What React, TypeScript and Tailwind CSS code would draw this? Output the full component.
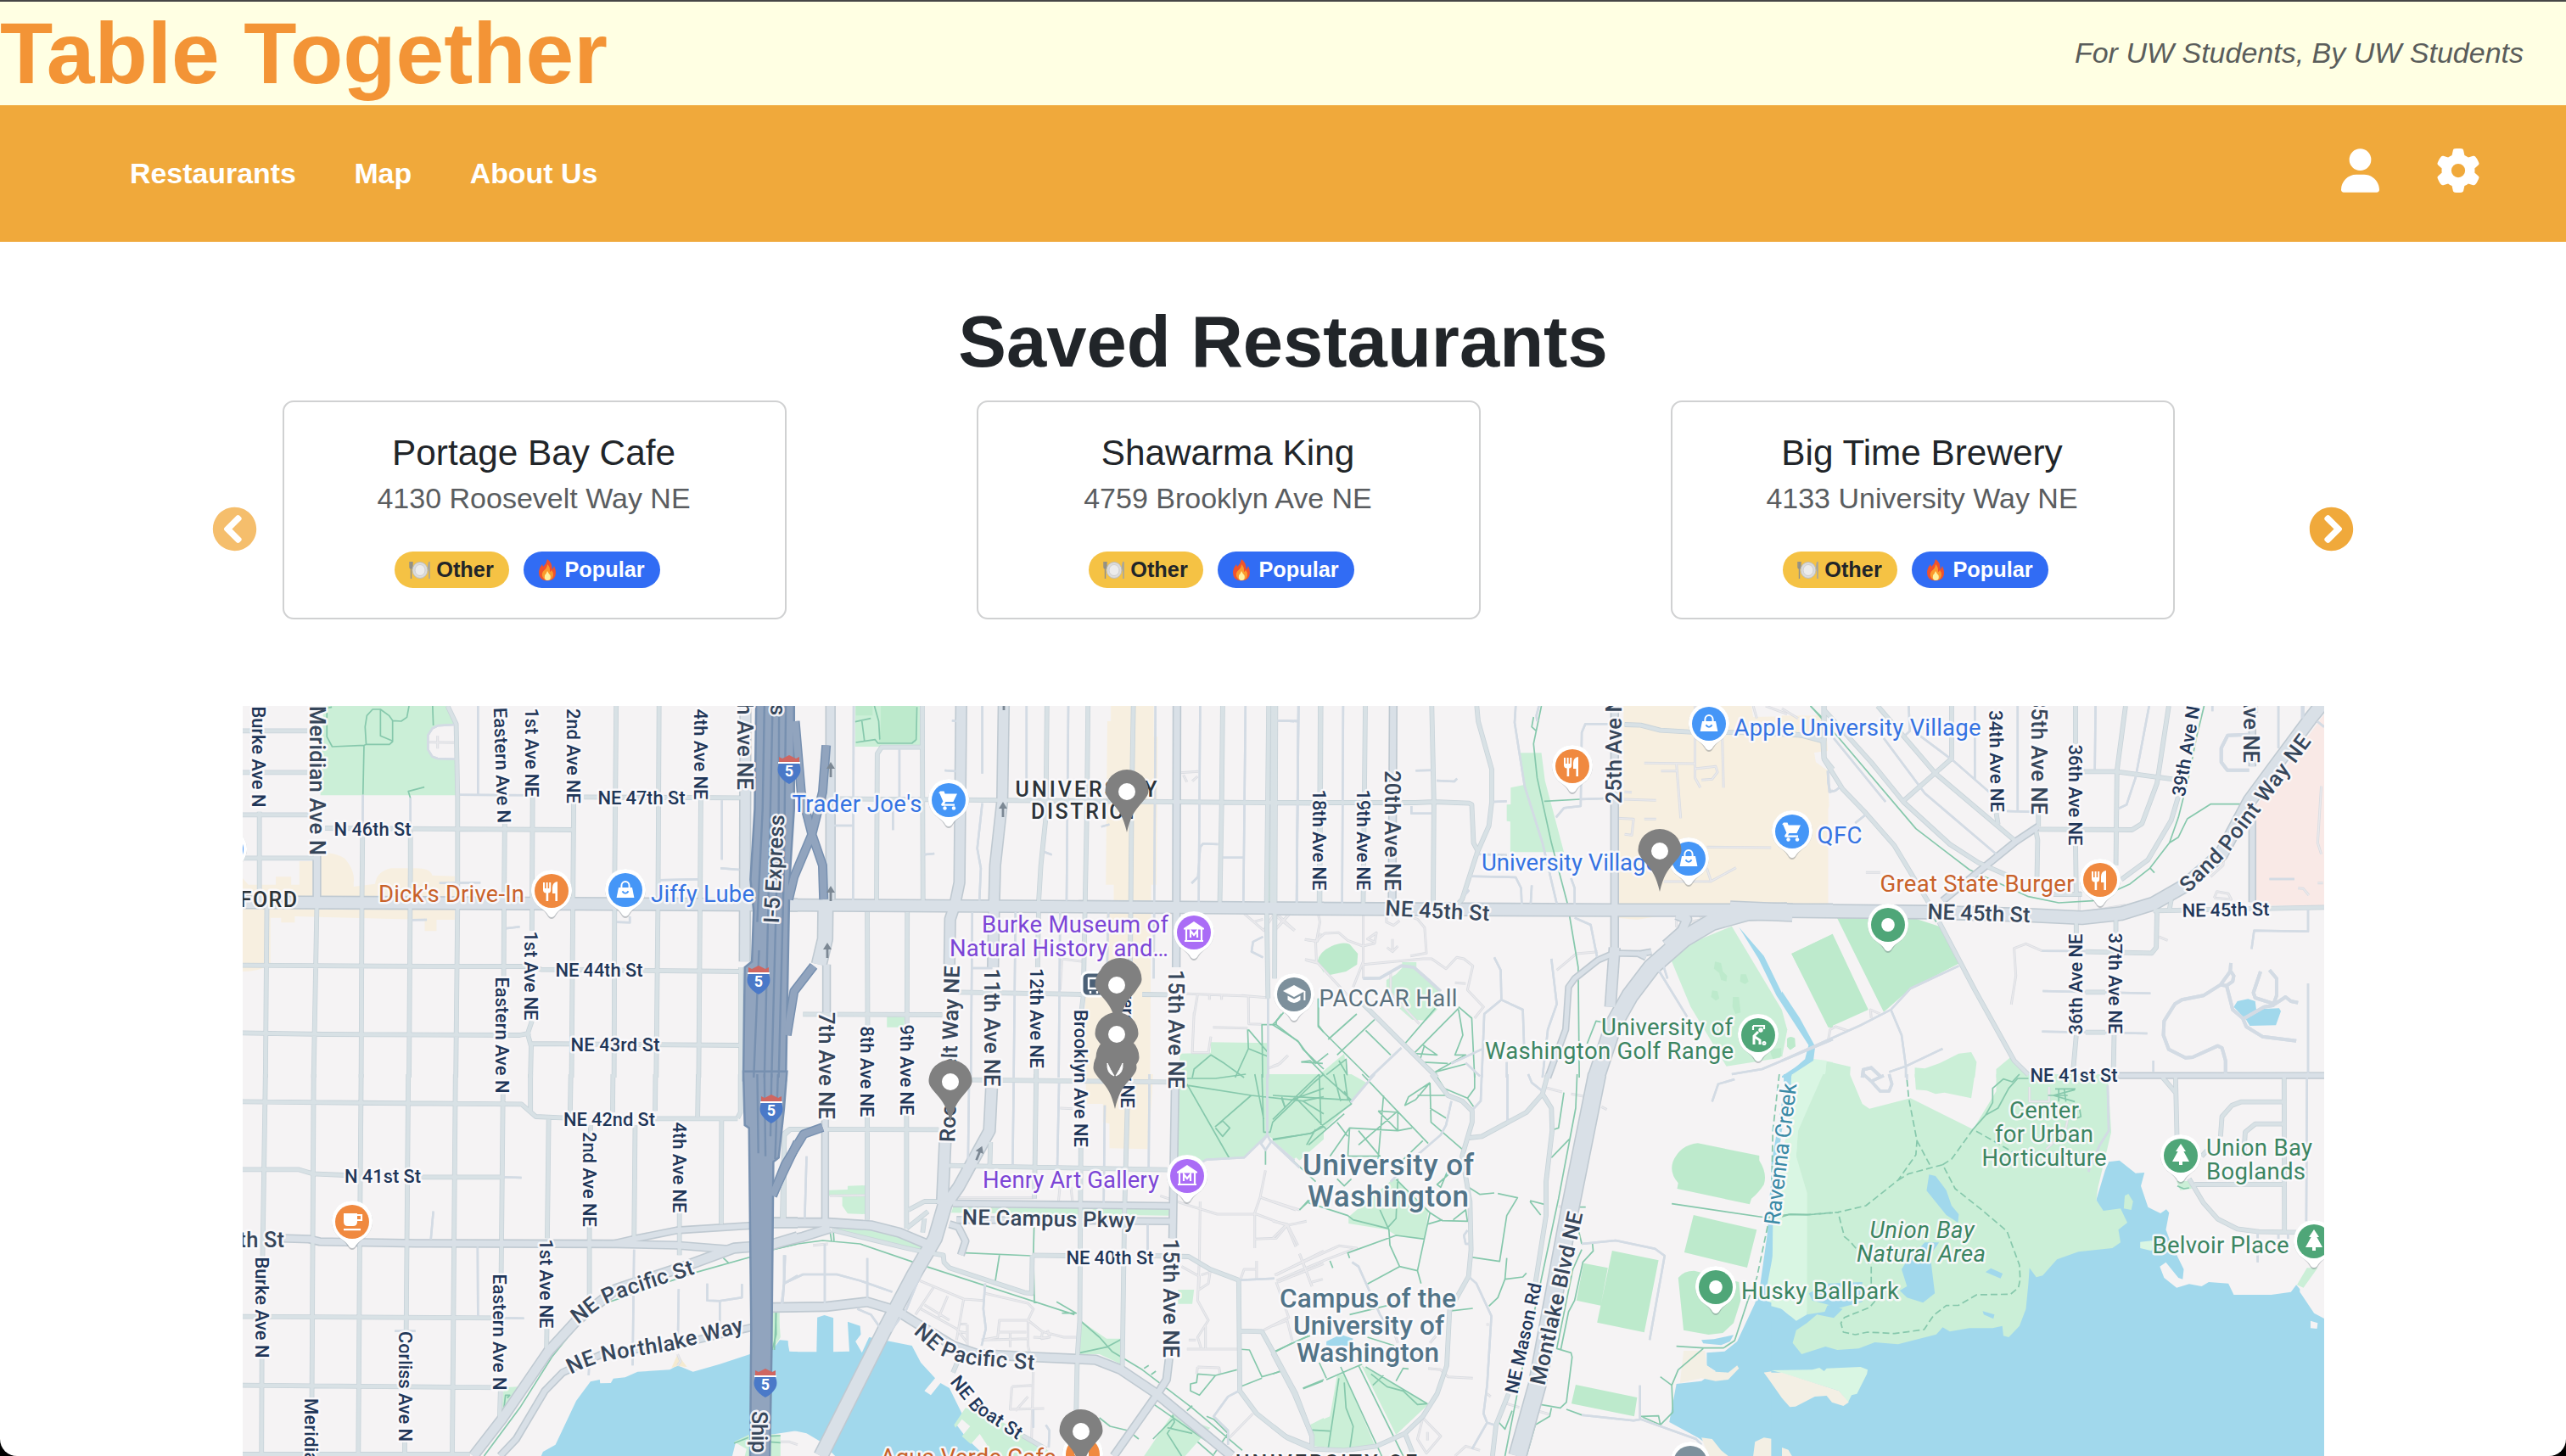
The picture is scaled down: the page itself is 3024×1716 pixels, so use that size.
import React from "react";
import { FaUser, FaGear } from "react-icons/fa6";
import { FaChevronCircleLeft, FaChevronCircleRight } from "react-icons/fa";

const sans = "font-['Liberation_Sans',Arial,sans-serif]";

/* ------------------------------------------------------------------ */
/* Map data. The map is cut in eight tiles; each tile has its own units */
/* ------------------------------------------------------------------ */

type Tile = { x: number; y: number; areas?: [string, string][]; roads: [number, string][]; paths?: string; dashes?: string; walks?: string; highway?: string; lanes?: string; ramps?: string };

const PARK = "#cbefd7";
const FIELD = "#bdeacc";
const PALE = "#d9f6e3";
const WATER = "#a1d8ec";
const SHOP = "#f7efe0";
const SAND = "#f3efe4";
const LAND = "#f5f3f4";

const tiles: Tile[] = [
  {
    x: 280, y: 820,
    areas: [
      [PARK, "M240,36 L588,36 L612,100 L612,352 L232,352 Z"],
      [LAND, "M612,100 L560,106 L545,116 L533,140 L533,190 L545,215 L560,222 L612,226 Z"],
      [SHOP, "M14,645 L30,668 L107,668 L107,640 L150,640 L150,668 L173,668 L173,585 L212,585 L212,560 Q260,545 300,575 Q330,620 325,660 L325,675 L385,665 Q390,620 430,610 L500,610 Q540,610 545,635 L608,638 L608,792 L557,792 L557,832 L524,832 L524,792 L160,780 L160,802 L122,802 L122,785 L92,785 L92,950 Q60,975 14,975 Z"],
    ],
    roads: [
      [2.5, "M673,36 L673,350 M1356,370 L1356,580 M1352,610 L1405,615 M1180,652 L1290,649 M565,662 L680,661 M488,793 L530,792 M750,823 L790,817 M1062,800 L1098,802 L1098,780 M622,350 L820,352 M351,350 L350,470 M484,362 L484,470 M607,102 L560,106 L545,116 L533,140 L533,190 L545,215 L560,222 L612,224"],
      [5, "M61,410 L61,740 M82,740 L78,1350 M222,740 L213,1350 M350,470 L348,740 L346,1350 M484,470 L484,600 L480,1350 M588,36 L612,100 L616,360 L616,740 L611,1350 M748,450 L746,740 L745,1000 M826,350 L824,830 M824,1150 L812,1195 L822,1240 L820,1350 M941,380 L935,1350 M1060,36 L1056,600 L1054,1350 M1180,36 L1177,740 L1172,1350 M1297,370 L1291,1350 M14,124 L195,124 M14,271 L195,271 M14,421 L200,421 M245,468 L940,474 M14,574 L225,574 M970,358 L1415,361 M14,953 L400,956 L830,957 L850,968 L1415,975 M14,1192 L240,1197 L790,1200 L820,1192 M820,1230 L1408,1236 M1409,960 L1409,1350"],
      [8, "M222,560 L222,740"],
      [12, "M1422,36 L1420,940"],
      [14, "M14,730 L600,733 L1568,740"],
    ],
    paths: "M264,40 L250,44 L250,145 L265,180 L355,175 L360,172 L357,110 L362,70 L378,48 L400,48 L424,70 L434,88 L434,162 L425,172 L360,172 M400,48 L400,142 L434,160 M434,88 L458,90 L474,76 L480,36 M546,36 L548,105 M354,175 L351,350 M484,362 L478,338 L523,323",
    walks: "M535,164 L606,166 M560,142 L560,187",
    highway: "M1452,30 L1558,30 L1558,400 L1545,660 L1535,1360 L1416,1360 L1420,960 L1440,940 L1445,760 L1436,650 L1448,400 Z",
    lanes: "M1475,36 L1470,400 L1455,800 M1498,36 L1490,500 L1475,1350 M1516,36 L1515,400 L1495,1350 M1535,36 L1530,600 L1515,1350 M1460,900 L1445,1350",
  },
  {
    x: 900, y: 820,
    areas: [
      [PARK, "M256,36 L442,36 L442,180 L256,180 Z"],
      [FIELD, "M328,36 L426,36 L426,165 L322,165 L328,100 Z M258,36 L305,36 L305,70 L258,70 Z"],
      [SHOP, "M972,36 L1092,36 L1092,145 L1103,145 L1100,668 L1085,668 L1082,1350 L900,1350 L900,1060 L960,1060 L960,770 L980,770 L980,668 L958,668 L962,90 L972,90 Z"],
      [PARK, "M345,1132 L395,1136 L392,1172 L345,1172 Z M1252,1225 L1411,1228 L1411,1350 L1160,1350 L1166,1265 L1252,1262 Z M1416,36 L1426,36 L1421,735 L1411,735 Z M1552,940 L1568,910 L1568,980 Z"],
    ],
    roads: [
      [2.5, "M252,36 L250,725 M380,190 L380,358 M612,36 L612,275 M612,380 L598,540 L608,610 L604,725 M584,765 L580,1350 M580,963 L640,963 M736,36 L736,300 M705,765 L700,1350 M830,765 L826,1350 M853,36 L848,725 M1097,36 L1092,1000 M965,765 L960,1050 M1222,36 L1218,735 M1349,36 L1343,735 M1497,36 L1492,735 M195,459 L250,459 M362,380 L362,475 M1438,88 L1497,90 M1285,572 L1343,572 M1272,525 L1230,523 L1222,535 L1216,640 L1198,663 M527,88 L542,90 M507,264 L538,267 M448,562 L478,558 M785,552 L807,562 M945,463 L968,455 M1398,852 L1370,870 L1366,905 L1398,925 M1412,1070 L1412,1350"],
      [5, "M442,182 L330,182 L318,205 L316,725 M444,36 L446,725 M793,36 L790,430 L776,600 L770,725 L767,960 M908,36 L905,400 L900,725 L895,1060 L890,1110 M1035,36 L1030,400 L1026,1000 M1285,36 L1282,400 L1277,735 M1414,36 L1408,735 L1412,1070 M1426,36 L1423,735 M1560,36 L1557,735 M200,364 L1568,380 M290,765 L291,1165 M402,765 L401,1165 M110,1126 L500,1128 M545,1048 L895,1056 M1060,1056 L1130,1057 M763,1320 L763,1350"],
      [8, "M1157,36 L1155,960 M176,950 L176,1120"],
      [10, "M187,36 L187,720"],
      [12, "M553,36 L548,660 L535,740 L522,790 L520,950 M672,36 L668,370 L648,600 L645,740 L642,960"],
      [17, "M173,750 L172,860 L155,950"],
      [13.5, "M70,740 L800,745 L1568,752"],
    ],
    paths: "M429,40 L427,155 L415,168 L320,168 L312,155 L258,165 M310,36 L322,90 L325,155 M256,92 L300,80 M275,90 L282,158 M1450,1125 L1435,1150 L1435,1163 L1395,1163 L1397,1350 M1357,1180 L1411,1260 M1435,1163 L1498,1225 L1510,1250 L1568,1320 M1200,1350 L1205,1320 L1252,1270 L1290,1300 L1345,1350 M1355,1180 L1357,1248 L1320,1350 M1358,1248 L1411,1275 M1505,1295 L1530,1290 L1568,1340 M1553,1070 L1553,1165 L1568,1190",
    walks: "M1157,1052 L1357,1062 L1358,1160 L1395,1162 M1205,1130 L1215,1055 M1205,1120 L1200,1262 L1245,1262 L1252,1205 M1258,1172 L1355,1175 M1248,1055 L1248,1075 M1282,1055 L1282,1075 M1338,1060 L1415,1068 M1345,770 L1400,830 L1430,770 M1370,800 L1398,790 M1440,775 L1487,830 M1475,765 L1430,830 M1515,862 L1550,868 L1560,840 M1518,935 L1550,945 M835,930 L830,1040 M835,930 L895,940 M1165,272 L1217,268 M1175,280 L1185,305 M1200,302 L1215,285 M1410,1318 L1440,1305 L1468,1272",
    ramps: "M88,90 L105,340 L135,490 L165,600 L168,720 M175,175 L165,340 L135,490 L85,640 L70,720 M140,955 L85,1045 L65,1200",
  },
  {
    x: 1500, y: 820,
    areas: [
      [PARK, "M693,202 L752,202 L762,300 L815,553 L665,553 L665,445 L655,443 L655,385 L666,384 L666,325 L704,315 Z"],
      [FIELD, "M125,940 Q130,905 165,885 Q195,868 215,878 L238,912 L236,950 L205,975 L160,987 Q135,975 125,940 Z"],
      [PARK, "M362,942 L402,942 L402,965 L470,1050 L460,1110 L430,1148 L390,1145 L350,1100 L340,1060 L318,1040 L318,1005 L345,985 L362,962 Z M200,1265 L208,1350 L120,1350 Z"],
      [SHOP, "M982,36 L1340,36 L1345,75 L1545,70 L1553,195 L1515,200 L1520,245 L1555,265 L1555,740 L965,740 L965,400 L982,380 Z M965,770 L1100,775 L1020,792 L965,785 Z"],
      [PARK, "M1112,925 L1160,880 L1285,815 L1425,1110 L1440,1180 L1420,1280 L1270,1310 L1170,1100 Z"],
      [FIELD, "M1238,940 L1255,945 L1260,975 L1272,990 L1270,1010 L1255,1005 L1250,980 L1235,965 Z M1310,985 L1325,985 L1332,1010 L1322,1020 L1308,1010 Z M1230,1042 L1245,1045 L1250,1070 L1240,1078 L1227,1065 Z M1288,1065 L1305,1065 L1310,1120 L1295,1125 L1287,1100 Z M1440,1212 Q1450,1200 1462,1212 L1462,1240 L1450,1252 L1440,1240 Z M1390,1250 L1425,1245 L1425,1275 L1400,1285 Z"],
      [FIELD, "M1452,912 L1568,842 L1568,1175 L1555,1172 Z"],
      [PALE, "M1500,1285 L1568,1295 L1568,1350 L1440,1350 Z"],
      [WATER, "M1305,818 L1375,920 L1425,1050 L1517,1240 L1515,1265 L1450,1350 L1430,1350 L1490,1285 L1500,1235 L1410,1060 L1360,930 Z"],
    ],
    roads: [
      [2.5, "M72,36 L67,735 M197,36 L194,735 M680,36 L677,95 L705,320 L755,520 L795,735 M745,36 L738,70 L740,90 M14,88 L72,90 M400,265 L446,263 M459,300 L508,303 L516,293 M388,390 L388,416 L446,416 M618,375 L655,373 M555,638 L680,642 L695,680 L697,738 M725,670 L722,735 M572,560 L655,563 M835,645 L845,680 L845,740 M793,430 L815,397 L862,390 L865,130 L875,100 L945,100 M860,366 L950,362 M845,785 L890,810 L908,925 M620,925 L638,970 L640,1075 L700,1110 L705,1290 M640,1075 L592,1125 L585,1350 M780,930 L795,1090 L770,1180 L755,1350 M1075,960 L1160,1135 M1090,940 L1105,1000 M1285,1338 L1370,1320 L1568,1215 M540,680 L548,690 L530,715 M655,1295 L655,1350 M360,1245 L272,1350 M540,1298 L580,1345 M500,1300 L585,1250"],
      [5, "M8,36 L5,1000 M133,36 L130,735 M259,36 L253,735 M445,36 L451,380 L449,735 M571,36 L575,90 L613,260 L613,375 L605,460 L572,555 L530,720 L515,740 M5,378 L400,378 L450,375 L550,380 L557,385 L562,520 L575,552 M253,1090 L460,1350 M985,102 L1030,104 L1085,122 L1165,128 L1340,130 L1480,140 L1540,160 L1543,220 L1568,260 M1543,36 L1543,160"],
      [3.5, "M253,1000 L300,998 L360,955 L395,960 L440,1010 L470,1045"],
      [8, "M337,36 L334,735 M957,36 L957,900"],
      [6, "M1060,905 L1030,912 L955,910 L910,935 L845,1000 L828,1030 L820,1180 L770,1350 M1020,910 L1045,925"],
      [12, "M957,890 L945,1100"],
      [19, "M1440,762 L1330,765 L1230,800 L1150,860 L1060,960 L1000,1060 L955,1160 L905,1350"],
      [10, "M1130,775 L1160,790 L1145,830 L1100,880"],
      [14, "M5,752 L960,758 L1568,758"],
      [20, "M1280,757 L1455,767"],
    ],
    paths: "M752,36 L730,170 L740,290 L780,520 L825,735 L855,960 L858,1350 M730,75 L725,110 L738,125 M760,373 L860,366 M127,1070 L127,1170 L270,1350 M235,1125 L155,1215 M285,1145 L180,1270 M260,1183 L330,1270 M455,1105 L370,1230 M520,1105 L430,1220 L395,1265 L460,1340 M520,1100 L557,1140 L565,1350 M520,1110 L532,1200 L510,1270 L540,1270 L455,1330 M425,1235 L410,1295 L490,1300 M395,1265 L460,1270 L420,1235 M30,1120 L10,1150 L0,1163 L70,1220 L90,1255 L120,1300 L155,1265 M80,1295 L140,1300 M945,1160 L905,1150 L880,1230 M1505,36 L1540,80 M185,1290 L208,1340 L205,1285 L150,1340 M455,1330 L540,1302",
    walks: "M90,862 L120,868 L145,840 L185,838 L210,865 L252,885 L285,875 L290,838 L265,860 L285,870 M120,868 L122,940 L90,932 M127,770 L132,800 L122,868 M122,940 L210,1060 M253,770 L253,1000 M253,950 L420,930 L445,930 L485,965 L515,925 L535,930 L560,955 L545,1040 L590,1100 L565,1140 M360,770 L405,790 L425,820 L430,910 L385,920 M335,860 L335,905 L320,890 M335,905 L350,885 M253,940 L225,1030 M5,830 L50,768 M5,775 L60,830 M318,770 L318,800 L338,812 L355,795 M330,980 L330,1050 L410,1160 M510,1015 L540,1018 M910,905 L850,912 L795,970 M1182,36 L1182,290 L1197,325 M1182,258 L1240,250 L1245,270 L1230,295 L1200,298 M1258,130 L1262,325 M1040,238 L1180,240 M1130,240 L1142,433 M1087,266 L1130,266 M963,433 L1010,436 L1005,493 L985,490 M1040,436 L1073,436 M963,365 L1073,370 M985,340 L1005,341 M1215,535 L1395,537 M1095,657 L1227,656 L1297,608 M1227,656 L1215,610 M1345,36 L1355,80 M1380,36 L1440,65 M1555,270 L1558,340 L1568,335 M1130,795 L1130,815 L1150,820 M1165,740 L1205,790 L1165,800 M0,1310 L20,1300 L42,1272",
  },
  {
    x: 2100, y: 820,
    areas: [
      [SHOP, "M0,70 L122,72 L128,195 L90,200 L95,235 L128,265 L132,390 L118,425 L128,740 L0,740 Z"],
      ["#f9e9e6", "M1322,400 L1390,290 L1518,65 L1518,742 L1325,742 Z"],
      [FIELD, "M153,782 L360,782 L440,815 L498,945 L360,1035 L285,1118 Z M27,912 L142,842 L242,1110 L132,1172 Z M15,1212 L35,1210 L38,1240 L22,1252 L14,1240 Z"],
      [PARK, "M-10,1120 L15,1180 L0,1280 Z M125,1292 L192,1312 L190,1350 L120,1350 Z M372,1315 L400,1318 L440,1300 L495,1265 L530,1260 L545,1295 L540,1350 L372,1350 Z M600,1320 L640,1278 L690,1350 L600,1350 Z"],
      [PALE, "M85,1283 L125,1290 L120,1350 L15,1350 Z"],
      [WATER, "M0,1045 L50,1140 L93,1240 L88,1290 L15,1350 L0,1350 L0,1345 L72,1285 L78,1240 L0,1075 Z M1265,1100 L1275,1080 L1305,1072 L1325,1080 L1328,1110 L1295,1140 Z M1297,1140 L1335,1108 L1392,1105 L1397,1115 L1383,1165 L1310,1167 Z"],
    ],
    roads: [
      [2.5, "M355,36 L358,125 L345,140 M385,140 L480,230 L580,340 M285,150 L400,345 L600,560 M145,150 L290,375 M540,36 L540,295 M660,36 L660,408 M630,408 L695,410 M1028,36 L990,290 L965,385 L940,400 M878,36 L876,260 M850,903 L728,902 M730,1044 L1032,1052 M728,1187 L1023,1194 M1473,755 L1473,833 L1322,830 L1315,895 M1473,1017 L1473,1350 M1040,1290 L1040,1330 M1390,36 L1390,185 M305,1110 L335,1200 L347,1310 L347,1350 M0,1290 L220,1165 L305,1110 L360,1035 L495,955 M450,1248 L347,1310 L300,1330 M1435,648 L1365,648 M128,265 L130,310 L135,340 L150,335 L165,320 M235,420 L205,450 M1330,36 L1330,60 M1205,36 L1205,55 M1498,90 L1518,110"],
      [4, "M1257,945 L1255,975 L1228,1022 L1180,1060 L1120,1075 L1100,1090 L1070,1150 L1068,1200 L1083,1250 L1130,1280 L1150,1278 L1220,1238 L1232,1245 L1242,1290 L1242,1340 M1257,975 L1265,990 L1262,1010 L1245,1025 L1228,1022 M1245,1025 L1262,1110 L1290,1140 L1300,1170 L1345,1205 L1440,1220 M1340,975 L1320,1050 L1325,1068 L1380,1090 L1410,1065 L1425,1080 L1445,1085 M1365,970 L1385,1000 L1385,1060 L1375,1095 L1350,1100 L1295,1140 M1308,137 L1248,140 L1230,185 L1230,235 L1247,263 L1308,263 M225,1350 L228,1322 L250,1315 L275,1345 M1458,36 L1458,80"],
      [5, "M118,36 L118,225 L170,330 L235,415 L315,530 L410,730 M440,800 L540,1040 L650,1290 L690,1340 M0,130 L85,145 L115,160 M118,50 L250,235 L340,375 L470,525 L550,590 L640,640 M268,36 L430,275 L655,515 M475,36 L475,222 L340,372 M600,415 L605,455 M718,415 L718,462 M710,470 L716,510 L714,640 M720,472 L980,474 L1008,452 L1050,310 L1083,36 M822,36 L822,170 M822,530 L824,700 M962,36 L938,265 L935,600 M845,268 L935,268 L1095,295 M1110,355 L1090,440 L1025,580 L950,650 M1040,760 L1518,748 M824,790 L824,840 M824,1200 L815,1330 M935,790 L935,840 M930,1200 L928,1330 M1050,760 L1048,890 L1035,910 L850,905 M945,1342 L1518,1340 M1090,720 L1085,755 M850,1048 L905,1048 M850,1190 L905,1190 M760,702 L840,702"],
      [7, "M1317,36 L1317,250 M1317,400 L1317,730 M450,725 L655,515 L718,462"],
      [15, "M1518,20 L1480,80 L1380,250 L1310,370 L1230,560 L1130,670 L1040,735 L950,770 L840,785 L680,775 L400,765 L0,760"],
    ],
    paths: "M80,36 L160,150 L375,470 L525,615 L690,710 L775,732 L870,725 L975,665 L1030,610 L1085,520 L1110,430 L1140,280 L1160,150 L1182,36 M1085,520 L1110,500 L1135,435 L1200,383 L1300,383 M1030,608 L1043,626 M425,785 L432,800",
    walks: "M728,902 L683,877 L650,893 L655,990 L642,1092 M250,1140 L248,1110 L275,1125 M130,1215 L135,1180 L150,1170 L185,1185 M0,45 L45,80 M833,690 L832,760 M845,765 L962,740 M1055,852 L1080,865 M1510,320 L1500,520 L1510,560 M1445,680 L1460,682 L1475,705 M1500,662 L1515,662 M1210,715 L1218,692 L1250,700 L1258,720 L1210,715 M1240,540 L1235,600 L1200,640 M235,625 L275,625",
  },
  {
    x: 280, y: 1266,
    areas: [
      [WATER, "M1440,988 L1350,1025 L1275,1052 L1232,1030 L1210,1045 L1120,1052 L1085,1072 L1052,1076 L1045,1092 L1015,1093 L1014,1080 L988,1087 L948,1155 L890,1310 L855,1335 L850,1350 L1385,1350 L1395,1300 L1440,1275 Z"],
      [WATER, "M1490,985 L1515,950 L1540,945 L1545,980 L1568,982 L1568,1260 L1490,1275 Z"],
      [PARK, "M745,1108 L787,1105 L740,1190 Z M1500,840 L1515,835 L1520,930 L1495,980 Z M1440,1270 L1390,1300 L1425,1325 L1420,1350 L1520,1350 L1520,1275 Z"],
      ["#f5ead0", "M1232,990 L1258,1035 L1232,1032 L1215,1038 Z"],
    ],
    roads: [
      [2.5, "M672,610 L673,855 M548,485 L541,585 M1110,620 L1106,1030 M1235,760 L1233,920 M1315,740 L1315,800 L1350,802 L1412,790 L1412,742 M1350,802 L1350,900 M985,1010 L983,1065 M740,364 L795,366 M740,862 L802,863 M1533,640 L1530,740 L1523,815 M1530,740 L1568,712 M440,908 L498,908"],
      [5, "M78,0 L70,650 M68,1005 L67,1350 M213,0 L208,1145 M346,0 L342,600 L338,1350 M478,0 L474,600 L472,910 M468,1300 L468,1350 M610,0 L606,600 L601,1350 M743,70 L738,705 M736,1120 L733,1240 M820,0 L820,130 M871,160 L867,580 M866,900 L865,970 M933,0 L931,140 M988,180 L988,210 M985,540 L985,800 M1051,0 L1050,135 M1170,0 L1169,130 M1113,180 L1110,590 M1290,0 L1288,150 M1408,0 L1408,135 L1400,155 M1237,490 L1237,640 M1355,160 L1354,530 M14,97 L400,102 L795,106 L835,150 L920,155 M1170,157 L1400,157 M14,337 L170,337 L210,352 L300,357 M515,364 L740,364 M14,857 L740,862 M14,1100 L740,1108 M14,1344 L650,1344 M1530,520 L1530,210 L1545,195 L1568,195"],
      [7, "M1440,895 L1250,950 L1020,990 L910,1055 L860,1120 L780,1290 L735,1350 M1050,600 L1120,580 L1230,552 L1440,535"],
      [8, "M120,580 L200,583 L230,592 L500,598 L1060,600 L1230,605 L1380,620 M1490,825 L1568,825"],
      [11, "M1440,610 L1390,615 L1250,680 L1060,760 L950,870 L870,980 L740,1220 L660,1350 M1490,605 L1568,575 M1490,525 L1568,525"],
    ],
    paths: "M1568,600 L1500,620 M1440,645 L1285,700 L1030,810 L950,890 L880,1000 L790,1180 L690,1350 M1360,650 L1375,668 M745,1190 L750,1135 L762,1135 L755,1145 M1507,840 L1508,920 L1497,975 M1390,1305 L1430,1285 M1490,1300 L1520,1303 M1490,1280 L1520,1278",
    walks: "M1520,1300 L1545,1300 L1568,1310 M1232,990 L1240,1015 L1232,1030",
    highway: "M1416,-10 L1538,-10 L1530,120 L1515,295 L1500,310 L1495,985 L1490,1360 L1435,1360 L1438,900 L1432,190 L1420,180 Z",
    lanes: "M1455,0 L1458,280 M1475,0 L1478,290 M1495,0 L1492,220 M1513,0 L1505,300",
    ramps: "M1568,240 L1500,420",
  },
  {
    x: 900, y: 1266,
    areas: [
      [WATER, "M22,980 L45,940 L68,942 L68,982 L148,982 L150,860 L170,852 L195,862 L195,982 L240,980 L235,875 L270,890 L272,920 L257,945 L275,985 L295,930 L415,960 L440,1020 L480,1075 L450,1120 L468,1135 L495,1092 L520,1110 L555,1200 L540,1240 L570,1290 L620,1350 L200,1350 L160,1300 L120,1270 L75,1258 L22,1262 Z"],
      [PARK, "M565,1180 L640,1210 L780,1310 L810,1350 L600,1350 L625,1310 L605,1272 L580,1308 L555,1280 L578,1245 L555,1220 L537,1250 L533,1240 Z M22,840 L45,838 L42,930 L22,975 Z M1158,0 L1568,0 L1568,230 L1500,305 L1450,250 L1410,215 L1345,295 L1240,302 L1160,340 Z M182,410 L235,408 L235,395 L288,393 L288,495 L235,493 L220,465 L220,435 L182,430 Z M190,545 L300,550 L400,580 L455,620 L395,615 L280,580 Z M530,470 L1140,478 L1135,500 L525,490 Z M885,870 L960,935 L1000,935 L1000,1025 L940,990 L885,990 Z M1160,762 L1205,762 L1200,812 L1160,812 Z M1145,1200 L1250,1250 L1180,1350 L1065,1350 Z M1568,1215 L1530,1240 L1535,1310 L1568,1320 Z"],
      [SHOP, "M900,0 L1090,0 L1085,110 L1075,265 L968,262 L968,175 L950,170 L950,105 L905,105 Z"],
    ],
    roads: [
      [2.5, "M575,30 L572,320 M700,30 L697,325 M827,30 L822,325 M955,110 L952,455 M1080,0 L1078,330 M57,640 L57,740 L110,708 L205,708 L270,730 L360,770 M57,740 L53,810 M171,600 L171,815 M290,650 L290,800 M120,290 L115,510 M262,830 L300,850 L325,895 L355,905 M445,690 L400,830 L355,910 M620,740 L615,830 L622,900 L610,960 M1075,530 L1075,640 M1330,728 L1430,722 M1410,0 L1410,215 L1392,245 L1405,268 L1420,240 L1410,215 M1420,235 L1500,330 M1330,1120 L1300,1140 L1260,1210 L1300,1260 L1300,1310 M1410,215 L1345,295 L1240,302 L1200,330 M755,1185 L755,1250 M790,1240 L800,1260 L798,1320"],
      [5, "M290,150 L290,515 M400,145 L400,545 M490,196 L75,195 L58,215 L52,510 M515,323 L1130,338 M763,0 L758,440 M888,260 L885,870 L878,1000 L875,1190 M1018,120 L1010,500 L1004,1040 M635,240 L633,325 M752,640 L850,642 M1090,642 L1190,645 L1250,690 L1330,728 M752,640 L750,775 L730,772 L520,685 L505,665 L503,640 L450,628 M575,20 L1150,28 M190,550 L400,615 L455,630 M405,480 L450,450 L500,450 M400,545 L460,485 M445,560 L450,510 M1330,728 L1333,1120 L1380,1200 L1460,1280 L1530,1315 M1335,908 L1395,910 L1430,990 L1490,1130 L1535,1280 L1535,1330 M545,1010 L530,1055 M725,1278 L790,1325"],
      [7, "M172,160 L172,530 M530,457 L1145,466 M540,515 L1140,520 M520,530 L545,540 L565,590 L552,640"],
      [8, "M1152,50 L1145,580 M1135,1005 L1128,1080 L1100,1135 L980,1350"],
      [10, "M25,525 L180,525 L300,535 L380,560 L455,600 M25,600 L110,575 L185,545 M25,825 L175,822 L290,805 L370,835 L440,890 L530,960 L600,990 L760,1000 L930,1010 L1000,1045 L1100,1130 L1310,1350"],
      [13, "M508,240 L500,460 M638,50 L632,200 L545,400 L500,480"],
      [16, "M510,450 L480,580 L420,710 L340,900 L160,1350"],
    ],
    paths: "M25,620 L95,600 L165,588 L270,600 L420,665 M455,680 L870,850 M185,550 L190,590 M195,555 L197,590 M565,632 L750,642 M660,640 L648,735 M757,540 L755,640 L758,810 M820,805 L875,845 L835,845 M885,870 L940,930 L975,980 L1060,1045 L1200,1180 L1340,1330 M885,985 L960,965 L1000,938 M1090,1165 L1300,1350 M940,1215 L970,1245 L1020,1260 L1050,1290 M1065,1040 L1078,1030 M1085,1062 L1098,1050 M1185,1190 L1200,1172 M1330,972 L1360,975 L1395,1070 L1450,1050 M1335,1105 L1395,1075 M1215,1060 L1265,1065 L1325,1045 M1265,1065 L1220,1135 L1195,1120 L1195,1095 L1212,1090 L1215,1060 M1510,1110 L1568,1080 M1145,1205 L1150,1230 L1130,1270 L1170,1350 M1130,1250 L1200,1270 M1145,1220 L1090,1290 M1185,15 L1265,15 L1350,0 M1160,45 L1190,40 L1365,75 L1510,95 L1568,80 M1185,35 L1305,300 M1395,0 L1400,205 L1418,205 L1425,170 L1540,30 L1568,0 M1375,0 L1400,160 M1365,75 L1265,185 L1285,165 L1305,190 L1285,220 L1265,190 M1510,95 L1568,140 M1480,90 L1568,50 M1405,270 L1405,320 M1545,195 L1520,250 M1450,85 L1460,120 M1425,230 L1530,210 L1568,185 M1430,983 L1480,950 M1490,945 L1530,925 M1500,480 L1530,445 M1215,1300 L1260,1350 M1240,1210 L1260,1220 L1300,1270 L1260,1345 M30,975 L35,840",
    walks: "M437,730 L560,795 L615,800 M475,755 L425,850 M515,785 L490,860 M560,795 L540,940 M620,775 L740,810 L755,830 L740,870 L740,960 L755,1040 L750,1290 M740,870 L660,870 L655,930 L610,940 M740,870 L780,910 L840,930 L875,930 M615,940 L740,935 M655,912 L735,912 M690,910 L690,965 M695,1105 L750,1100 M695,1105 L690,1185 L785,1182 M780,910 L778,935 L800,930 L795,905 M440,830 L540,900 L570,950 M450,815 L520,870 M545,880 L570,885 M545,910 L568,915 M570,885 L570,960 M1222,450 L1220,640 L1215,800 L1245,870 L1215,930 L1225,970 M1237,890 L1237,970 M1185,972 L1330,972 M1190,940 L1210,940 M1170,680 L1220,715 L1218,760 M1225,710 L1250,700 L1245,740 L1215,765 M1110,430 L1180,460 L1270,495 L1380,495 L1465,535 L1490,610 M1405,340 L1390,435 L1375,490 L1375,615 M1390,435 L1490,480 M1465,535 L1435,580 L1375,583 M1520,520 L1465,535 M1500,635 L1535,750 M1335,725 L1345,690 L1380,690 L1380,660 M1380,690 L1380,725 M1435,710 L1568,625 M1440,735 L1568,670 M1435,735 L1470,860 L1400,905 M545,437 L755,437 M830,390 L825,455 M860,400 L865,455 M830,120 L865,122 M185,430 L285,428 M1215,1035 L1275,1038 L1278,1060 M1215,1035 L1212,1060 M1370,1200 L1300,1290 M740,1140 L705,1190 M138,605 L180,600 M755,930 L795,932",
    ramps: "M165,188 L112,212 L60,320 L25,430",
  },
  {
    x: 1500, y: 1266,
    areas: [
      [PARK, "M0,75 L60,85 L130,0 L220,0 L262,30 L218,105 L60,300 L0,235 Z M335,372 L350,372 L400,440 L435,485 L425,583 L345,570 L320,550 L212,528 L212,505 Z M180,1065 L200,1060 L285,1310 L220,1328 L115,1315 L105,1240 L160,1210 Z M248,1030 L435,1168 L345,1275 Z"],
      [FIELD, "M1135,385 Q1110,350 1120,310 Q1140,250 1190,244 L1362,288 L1362,305 Q1385,350 1375,390 Q1360,420 1340,440 L1335,460 L1132,405 Z M1178,498 L1355,550 L1328,684 L1152,630 Z M950,624 L1080,658 L1040,913 L908,878 Z M870,668 L938,685 L918,818 L850,800 Z M848,1098 L1020,1143 L1012,1210 L836,1165 Z M1135,720 Q1150,695 1180,695 L1305,735 L1310,800 L1290,880 L1260,915 L1220,921 L1150,905 Z"],
      [PALE, "M1450,0 L1568,0 L1568,880 L1465,870 L1430,830 L1372,800 L1400,600 L1395,480 L1440,240 Z"],
      [PARK, "M1540,0 L1568,0 L1568,840 L1495,840 L1497,420 L1465,300 L1470,200 Z"],
      [WATER, "M1434,0 L1452,0 L1450,60 L1425,200 L1415,300 L1400,480 L1400,640 L1385,740 L1380,800 L1400,810 L1425,830 L1465,872 L1568,848 L1568,1350 L1260,1350 L1240,1330 L1190,1285 L1110,1230 L1130,1095 L1200,1085 L1240,1050 L1215,1030 L1215,985 L1265,980 L1300,945 L1350,810 L1365,740 L1385,560 L1390,440 L1410,240 L1435,60 Z M150,945 L190,920 L225,935 L215,960 L150,960 Z M1200,940 L1235,937 L1290,922 L1280,945 L1255,958 L1205,952 Z"],
      [PARK, "M1455,920 L1470,890 L1520,855 L1568,855 L1568,960 L1510,975 L1485,990 L1460,960 Z"],
      [SAND, "M1150,978 L1210,978 L1215,1030 L1240,1052 L1275,1055 L1300,1030 L1305,1040 L1275,1080 L1240,1085 L1200,1075 L1140,1092 Z M1200,1285 L1230,1290 L1255,1330 L1275,1350 L1220,1350 Z M1350,1300 L1375,1285 L1400,1290 L1440,1350 L1345,1350 Z M1375,1055 L1410,1048 L1568,1100 L1568,1150 L1550,1137 L1520,1140 L1455,1177 L1435,1165 L1410,1110 Z"],
      [PALE, "M1405,1048 L1568,1045 L1568,1110 Z"],
    ],
    roads: [
      [2.5, "M548,715 L570,740 L612,855 L600,1100 L590,1200 L600,1232 L620,1240 M600,1232 L558,1325 M865,600 L960,588 L1070,617 L1097,642 L1055,940 M865,1205 L1010,1225 L1030,1220 L1185,1290 L1200,1310 M1028,1100 L1028,1220 M657,0 L657,165 M500,95 L485,180 L470,215 L410,280 L330,380 M285,0 L218,100 M715,0 L725,30 L755,60 M585,0 L582,95 L560,125 M222,665 L240,680 L300,850 L330,910 M1230,97 L1247,35 L1293,18 M545,552 L535,570 L540,600 L550,600 M0,240 L60,305"],
      [5, "M445,0 L490,75 L530,95 L558,130 L558,170 L530,290 L552,450 L555,620 L548,715 L495,835 L487,1030 L460,1130 L420,1210 L370,1270 L290,1315 L200,1330 L110,1325 L40,1285 L0,1245 M370,1270 L395,1350 M0,985 L60,1130 L110,1280 L110,1320 M770,0 L755,70 L780,120 L782,200 L765,380 L765,500 L735,740 M660,1130 L625,1240 L615,1350 M755,70 L710,135 L585,220 L550,225"],
      [20, "M908,0 L830,490 L740,1100 L685,1350"],
    ],
    paths: "M0,75 L220,92 M65,85 L150,195 M130,0 L135,180 M130,0 L60,85 L0,160 M140,0 L220,92 M170,0 L190,95 M200,0 L210,90 M25,80 L35,120 M0,232 L110,208 L220,105 L200,60 M100,250 L200,140 M250,0 L435,245 M310,75 L295,300 M295,130 L350,200 L215,190 L160,290 M350,130 L350,200 L390,190 M350,130 L240,250 M295,130 L350,135 M215,190 L210,290 L300,290 L240,200 M180,170 L210,220 M455,0 L480,50 L545,85 L565,50 L565,0 M545,85 L562,115 M440,30 L380,80 L370,110 L400,90 L440,30 M405,75 L485,75 M440,30 L443,170 L530,265 M440,120 L485,155 M420,235 L350,320 M0,240 L120,380 M100,445 L75,480 M100,455 L210,500 L225,515 L320,545 L345,510 L350,370 M345,372 L440,490 L475,518 L548,520 M435,530 L475,515 M440,490 L405,695 L415,740 M425,583 L345,570 L210,632 L215,650 M300,480 L325,550 L328,605 L355,680 L265,742 M355,680 L405,695 M548,400 L580,425 L620,420 M630,422 L685,437 L655,500 L635,662 L555,647 M720,447 L760,460 M720,450 L750,498 M655,650 L650,725 L700,717 L710,703 M650,725 L630,790 L605,820 M560,828 L490,838 M100,925 L5,980 M215,850 L380,800 M265,930 L340,960 M130,1020 L150,1075 M0,1060 L20,1050 M85,1112 L140,1085 M150,1080 L250,1025 M190,1035 L305,1350 M240,1030 L365,1350 M185,1075 L155,1325 M200,1090 L205,1180 L225,1245 L215,1330 M110,1258 L160,1262 M275,1060 L320,1105 L365,1120 L405,1168 L432,1165 L260,1035 M280,1100 L310,1065 M345,1085 L365,1040 L380,1042 M500,345 L460,390 L470,400 L490,340 M505,515 L540,480 L545,520 M160,660 L168,685 M180,370 L200,395 L220,370 M1117,458 L1380,507 L1450,495 L1500,497 M1130,962 L1205,968 L1262,968 L1293,942 L1330,800 M1205,970 L1135,1045 L1117,1100 L1120,1195 L1085,1240 M1085,1070 L1117,1100 M1030,1210 L1080,1208 L1085,1240 L1035,1212 M895,600 L897,625 L868,665 L845,800 L828,840 L806,975 M865,620 L840,690 L795,970 L835,985 L838,1000 L822,1160 L805,1180 L750,1168 M822,1185 L865,1205 M852,0 L848,120 L800,440 L700,1030 L650,1350 M815,65 L800,190 L788,195 M830,230 L780,295 M860,470 L876,470 M850,520 L865,600 M780,1180 L775,1210 L735,1240 L710,1350 M670,1190 L650,1255 L632,1230",
    dashes: "M1418,0 L1400,200 L1395,480 L1355,720 L1330,800 M1500,497 L1568,490",
    walks: "M5,710 L185,607 L235,615 L150,655 L10,730 M0,450 L75,480 M0,520 L40,530 L70,605 M0,580 L40,530 M75,635 L110,750 M110,735 L140,725 M0,890 L40,870 L55,945 M435,1040 L470,1045 L490,1070 L560,1075 M420,1215 L405,1290 L430,1340 L470,1280 L420,1215 M433,1265 L433,1295 M510,1350 L540,1315 L580,1330 M330,880 L350,950 M460,920 L440,950 M765,48 L810,63 M835,70 L870,78 M920,115 L935,125 M735,1188 L775,1203 M800,468 L830,470 M650,1163 L690,1178 M598,885 L605,885 M600,1130 L610,1140",
  },
  {
    x: 2100, y: 1266,
    areas: [
      [WATER, "M-30,870 L-30,1350 L1520,1350 L1520,865 L1490,845 L1450,770 L1450,760 L1440,745 L1425,770 L1370,780 L1265,780 L1250,740 L1195,735 L1175,750 L1140,742 L1105,755 L1070,720 L1058,680 L1075,665 L1110,720 L1122,725 L1125,690 L1090,600 L1075,550 L1084,490 L1076,478 L1060,492 L1025,470 L1005,395 L1015,348 L990,350 L945,305 L915,310 L905,340 L880,445 L895,485 L640,600 L400,700 L100,830 Z"],
      [PARK, "M105,0 L190,0 L225,105 L245,122 L360,85 L535,195 L600,60 L600,0 L912,0 L922,205 L885,400 L880,445 L900,483 L948,475 L967,525 L942,550 L948,595 L925,615 L830,628 L770,655 L730,712 L712,718 L693,685 L690,740 L683,830 L665,890 L635,930 L620,925 L617,890 L590,898 L525,898 L470,910 L450,895 L432,920 L325,955 L260,948 L215,970 L155,975 L122,963 L55,990 L30,950 L40,905 L70,880 L98,850 L145,862 L170,830 L128,815 L120,840 L70,850 L70,420 L40,290 L60,150 Z M372,0 L540,0 L530,85 L455,65 L430,70 L405,58 L375,55 Z M960,430 L970,423 L983,450 L978,480 L957,475 Z"],
      [PALE, "M35,0 L115,0 L45,200 L40,290 L70,420 L70,850 L40,872 L0,830 L-30,820 L-25,560 L-10,340 L15,200 Z M1003,593 L1040,588 L1035,625 L1003,615 Z"],
      [WATER, "M5,0 L28,0 L15,60 L-10,250 L-20,320 L-30,320 L5,60 Z M412,355 L430,360 L460,410 L475,465 L495,495 L493,525 L460,498 L405,412 Z M400,595 L440,595 L415,640 L428,775 L395,808 L350,790 L330,765 L350,750 L335,690 L345,670 Z M570,700 L585,686 L618,705 L612,722 Z M562,838 L595,850 L592,865 L565,850 Z M75,775 L130,740 L225,735 L225,805 L150,830 L130,815 L85,800 Z"],
      [PALE, "M-30,1047 L85,1045 L105,1038 L118,1050 L125,1040 L220,1035 L240,1045 L238,1060 L210,1130 L195,1135 L185,1160 L160,1120 L0,1057 Z"],
      [SAND, "M-50,1055 L0,1055 L160,1120 L187,1160 L172,1173 L140,1160 L125,1137 L92,1140 L38,1175 L22,1177 L0,1145 Z M0,1320 L18,1328 L28,1350 L0,1350 Z"],
      [LAND, "M1480,872 L1500,880 L1498,900 L1480,898 Z"],
      [PARK, "M1470,685 L1500,685 L1460,755 L1442,745 Z M1105,378 L1145,378 L1147,405 L1115,410 Z"],
    ],
    roads: [
      [2.5, "M1470,10 L1468,520 M1332,560 L1332,665 M1390,560 L1390,582 M1417,560 L1417,582 M912,40 L915,200 L890,250 L858,345 M350,0 L350,20"],
      [3.5, "M228,0 L250,25 L275,60 L300,60 L308,35 L300,0 M250,25 L285,5"],
      [5, "M1102,10 L1106,220 M1065,10 L1102,65 M1406,10 L1407,560 M1406,98 L1285,98 L1260,110 L1232,150 L1228,220 M1406,176 L1325,176 L1297,205 L1293,290 M1175,290 L1190,270 M1155,390 L1406,389 M1140,370 L1180,455 L1220,512 L1275,547 L1335,557 L1440,559"],
      [6, "M930,5 L1520,5"],
    ],
    paths: "M570,145 L590,100 L590,50 L620,17 L645,27 L665,0 M570,145 L605,120 L635,50 L660,15 L690,15 M535,195 L570,145 M0,504 L20,496 L70,497 M760,75 L820,55 M760,75 L820,97 M765,52 L822,52 M790,50 L795,97 M775,52 L775,97 M745,75 L800,75 M1107,395 L1125,405 L1140,402 M833,120 L837,150 L820,158",
    dashes: "M350,20 L355,85 L378,235 L375,285 L350,330 L325,375 L235,465 L157,488 L70,497 M325,375 L355,352 L450,320 L485,405 L555,475 L630,555 L665,675 L667,725 L662,755 L640,778 L545,780 L495,817 L460,818 L425,852 L398,903 L315,917 L240,912 L205,921 L172,912 L165,880 L175,860 L245,825 L262,800 M250,740 L250,680 L190,590 L175,575 L157,488 M378,235 L418,330 M450,320 L475,300 L535,195 L660,285",
    walks: "M693,45 L693,97 L748,97 L748,45 M800,160 L795,190 L770,230 L740,265",
  },
];

const SX = 660 / 1568;
const SY = 1 / 3;

function Layer({ draw }: { draw: (t: Tile) => React.ReactNode }) {
  return (
    <g>
      {tiles.map((t, i) => (
        <g key={i} transform={`translate(${t.x} ${t.y}) scale(${SX} ${SY})`}>
          {draw(t)}
        </g>
      ))}
    </g>
  );
}

const Line = ({ d, c, w, dash }: { d?: string; c: string; w: number; dash?: string }) =>
  d ? <path d={d} fill="none" stroke={c} strokeWidth={w} strokeDasharray={dash} strokeLinejoin="round" strokeLinecap="butt" vectorEffect="non-scaling-stroke" /> : null;

/* Labels ------------------------------------------------------------ */

type Kind = "st" | "av" | "poiO" | "poiB" | "poiP" | "poiG" | "poiS" | "uni" | "campus" | "area" | "creek" | "nature";

const kinds: Record<Kind, { fill: string; size: number; weight: number; italic?: boolean }> = {
  st: { fill: "#1f3658", size: 22, weight: 500 },
  av: { fill: "#36465a", size: 25.5, weight: 500 },
  poiO: { fill: "#c9622a", size: 27.5, weight: 400 },
  poiB: { fill: "#3573e2", size: 27.5, weight: 400 },
  poiP: { fill: "#7c45d6", size: 27.5, weight: 400 },
  poiG: { fill: "#3c8562", size: 27.5, weight: 400 },
  poiS: { fill: "#5a717e", size: 27.5, weight: 400 },
  uni: { fill: "#527488", size: 35, weight: 500 },
  campus: { fill: "#527488", size: 31.5, weight: 500 },
  area: { fill: "#2c3338", size: 25, weight: 500 },
  creek: { fill: "#3a8aa6", size: 26, weight: 400 },
  nature: { fill: "#3c8562", size: 27.5, weight: 400, italic: true },
};

type Label = [Kind, number, number, string, number, number?, ("start" | "middle" | "end")?];

const labels: Label[] = [
  ["st", 305, 892, "Burke Ave N", 119, 90],
  ["av", 374, 920, "Meridian Ave N", 176, 90],
  ["st", 439, 977, "N 46th St", 91],
  ["st", 592, 902, "Eastern Ave N", 136, 88],
  ["st", 627, 887, "1st Ave NE", 105, 90],
  ["st", 676, 891, "2nd Ave NE", 112, 90],
  ["st", 826, 889, "4th Ave NE", 107, 90],
  ["av", 878, 868, "7th Ave NE", 126, 90],
  ["st", 756, 940, "NE 47th St", 103],
  ["av", 912, 1024, "I-5 Express", 128, -87],
  ["av", 917, 779, "I-5 Express", 128, 90],
  ["area", 350, 1060, "WALLINGFORD", 184, 0, "end"],
  ["st", 706, 1143, "NE 44th St", 103],
  ["st", 626, 1150, "1st Ave NE", 105, 90],
  ["st", 592, 1220, "Eastern Ave N", 137, 90],
  ["st", 725, 1231, "NE 43rd St", 105],
  ["st", 718, 1319, "NE 42nd St", 108],
  ["st", 695, 1390, "2nd Ave NE", 112, 90],
  ["st", 801, 1376, "4th Ave NE", 107, 90],
  ["st", 451, 1386, "N 41st St", 90],
  ["av", 335, 1461, "N 40th St", 107, 0, "end"],
  ["st", 309, 1541, "Burke Ave N", 119, 90],
  ["st", 589, 1570, "Eastern Ave N", 137, 90],
  ["st", 644, 1513, "1st Ave NE", 105, 90],
  ["st", 478, 1634, "Corliss Ave N", 130, 90],
  ["st", 367, 1724, "Meridian Ave N", 152, 90],
  ["av", 895, 1663, "Ship Canal Bridge", 196, 90, "start"],
  ["area", 1280, 930, "UNIVERSITY", 167],
  ["area", 1278, 956, "DISTRICT", 126],
  ["av", 1119, 1242, "Roosevelt Way NE", 208, -88.5],
  ["av", 1169, 1211, "11th Ave NE", 139, 90],
  ["st", 1222, 1200, "12th Ave NE", 118, 90],
  ["st", 1274, 1271, "Brooklyn Ave NE", 162, 90],
  ["av", 1386, 1213, "15th Ave NE", 140, 90],
  ["st", 1329, 1221, "University Way NE", 170, 90],
  ["av", 974, 1256, "7th Ave NE", 126, 90],
  ["st", 1022, 1263, "8th Ave NE", 107, 90],
  ["st", 1069, 1261, "9th Ave NE", 107, 90],
  ["av", 1236, 1436, "NE Campus Pkwy", 204, 1],
  ["st", 1308, 1482, "NE 40th St", 103],
  ["av", 1380, 1530, "15th Ave NE", 140, 90],
  ["st", 1555, 990, "18th Ave NE", 119, 90],
  ["st", 1607, 990, "19th Ave NE", 119, 90],
  ["av", 1641, 979, "20th Ave NE", 142, 90],
  ["av", 1694, 1073, "NE 45th St", 123, 3],
  ["av", 1902, 877, "25th Ave NE", 140, -90],
  ["av", 2332, 1076, "NE 45th St", 121, 2],
  ["st", 2623, 1072, "NE 45th St", 103, -1],
  ["st", 2353, 897, "34th Ave NE", 120, 89],
  ["av", 2403, 890, "35th Ave NE", 140, 90],
  ["st", 2446, 937, "36th Ave NE", 119, 90],
  ["st", 2446, 1160, "36th Ave NE", 119, -90],
  ["st", 2493, 1159, "37th Ave NE", 119, 90],
  ["st", 2577, 879, "39th Ave NE", 120, -80.5],
  ["av", 2653, 829, "40th Ave NE", 140, 90],
  ["st", 2444, 1267, "NE 41st St", 103],
  ["st", 1795, 1577, "NE Mason Rd", 133, -77.5],
  ["av", 1834, 1530, "Montlake Blvd NE", 208, -77.5],
  ["creek", 2098, 1360, "Ravenna Creek", 168, -83],
  ["uni", 1636, 1373, "University of", 202],
  ["uni", 1636, 1410, "Washington", 190],
  ["campus", 1612, 1530, "Campus of the", 208],
  ["campus", 1613, 1562, "University of", 178],
  ["campus", 1612, 1594, "Washington", 168],
  ["area", 1563, 1724, "UNIVERSITY OF", 214],
  ["poiO", 532, 1053, "Dick's Drive-In", 172],
  ["poiB", 828, 1053, "Jiffy Lube", 122],
  ["poiB", 1010, 947, "Trader Joe's", 153],
  ["poiP", 1377, 1089, "Burke Museum of", 220, 0, "end"],
  ["poiP", 1377, 1117, "Natural History and…", 258, 0, "end"],
  ["poiP", 1262, 1390, "Henry Art Gallery", 208],
  ["poiO", 1141, 1717, "Agua Verde Cafe", 207],
  ["poiB", 2189, 857, "Apple University Village", 291],
  ["poiB", 1746, 1016, "University Village", 208, 0, "start"],
  ["poiB", 2168, 984, "QFC", 53],
  ["poiS", 1636, 1176, "PACCAR Hall", 163],
  ["poiG", 2042, 1210, "University of", 155, 0, "end"],
  ["poiG", 2043, 1238, "Washington Golf Range", 293, 0, "end"],
  ["poiO", 2330, 1041, "Great State Burger", 229],
  ["poiG", 2145, 1521, "Husky Ballpark", 186],
  ["poiG", 2409, 1308, "Center", 82],
  ["poiG", 2409, 1336, "for Urban", 116],
  ["poiG", 2409, 1364, "Horticulture", 147],
  ["poiG", 2600, 1352, "Union Bay", 125, 0, "start"],
  ["poiG", 2600, 1380, "Boglands", 117, 0, "start"],
  ["poiG", 2617, 1467, "Belvoir Place", 161],
  ["nature", 2265, 1449, "Union Bay", 123],
  ["nature", 2264, 1477, "Natural Area", 152],
];

const curved: [string, string, string, Kind, number][] = [
  ["pacificWest", "M681,1561 L706,1542 Q720,1533 740,1527 L850,1491", "NE Pacific St", "av", 152],
  ["northlake", "M673,1620 Q696,1607 725,1602 L790,1592 L910,1561", "NE Northlake Way", "av", 211],
  ["pacificEast", "M1076,1571 L1100,1592 Q1118,1604 1150,1609 L1250,1617", "NE Pacific St", "av", 154],
  ["boat", "M1119,1629 L1145,1661 L1230,1718", "NE Boat St", "st", 106],
  ["sandPoint", "M2579,1053 L2626,1006 L2668,950 L2745,846", "Sand Point Way NE", "av", 231],
];

function MapText({ k, children, ...rest }: { k: Kind; children: React.ReactNode } & React.SVGProps<SVGTextElement>) {
  const s = kinds[k];
  return (
    <text fontFamily="Roboto, sans-serif" fontSize={s.size} fontWeight={s.weight} fontStyle={s.italic ? "italic" : undefined} fill={s.fill} stroke="#fbfafc" strokeOpacity={0.92} strokeWidth={5} strokeLinejoin="round" paintOrder="stroke" {...rest}>
      {children}
    </text>
  );
}

/* Markers ----------------------------------------------------------- */

const glyphs: Record<string, React.ReactNode> = {
  food: (
    <g fill="#fff">
      <path d="M-10,-10 h2 v7 h1.6 v-7 h2 v7 h1.6 v-7 h2 v9 q0,3 -3,3.6 v9.4 h-2.6 v-9.4 q-3.6,-.6 -3.6,-3.6z" />
      <path d="M7,-11 v23 h-2.6 v-9 h-3.4 v-7 q0,-6 6,-7z" />
    </g>
  ),
  bag: (
    <g>
      <path d="M-8,-3 h16 l2.4,12 h-20.8z" fill="#fff" />
      <path d="M-4.6,-2 v-3 a4.6,5 0 0 1 9.2,0 v3" fill="none" stroke="#fff" strokeWidth="2" />
      <path d="M-3.6,1.4 q3.6,5 7.2,0" fill="none" stroke="#4596f7" strokeWidth="1.8" />
    </g>
  ),
  cart: (
    <g fill="#fff">
      <path d="M-10,-10.5 h4.5 l1.2,3 h14.3 l-4.6,9.5 h-9 l-1.4,2.6 h12 v2.2 h-15 q-1.4,-.8 -.6,-2.2 l2,-3.2 -4.2,-9.7 h-1.2z" />
      <circle cx="-4.5" cy="9.5" r="2.2" />
      <circle cx="6" cy="9.5" r="2.2" />
    </g>
  ),
  museum: (
    <g>
      <path d="M0,-13 l12,8 v1.6 h-24 v-1.6z M-11,9 h22 v2 h-22z" fill="#fff" />
      <path d="M-9,-4 v13 M9,-4 v13 M-4,6 v-8 l4,5 l4,-5 v8" fill="none" stroke="#fff" strokeWidth="2.2" />
    </g>
  ),
  school: (
    <g>
      <path d="M0,-11 l13,7 -13,7 -13,-7z" fill="#fff" />
      <path d="M-7.5,1.5 l7.5,4 7.5,-4 v5 q-7.5,7 -15,0z" fill="#fff" />
      <path d="M12.4,-4 v11" stroke="#fff" strokeWidth="2" />
    </g>
  ),
  dot: <ellipse cx="0" cy="0" rx="7.8" ry="8" fill="#fff" />,
  golf: (
    <g fill="none" stroke="#fff" strokeWidth="3">
      <path d="M-6,-11 h13 v4 M-6,-11 v5" strokeWidth="2.2" />
      <circle cx="3" cy="-6" r="1.2" />
      <path d="M0,-4 l-5,5 v10 M-4,2 l6,4 v5" />
      <circle cx="7" cy="9.5" r="1" />
    </g>
  ),
  tree: <path d="M0,-14 l6,9 h-2.6 l6.6,12 h-8 v4 h-4 v-4 h-8 l6.6,-12 h-2.6z" fill="#fff" />,
  cup: (
    <g>
      <path d="M-10,-10 h16 v10 q0,5 -5,5 h-6 q-5,0 -5,-5z M-10,8 h20 v2.2 h-20z" fill="#fff" />
      <path d="M6,-8 h5 v6 h-5" fill="none" stroke="#fff" strokeWidth="2.2" />
    </g>
  ),
};

const O = "#f0893f";
const B = "#4596f7";
const P = "#aa6cf6";
const G = "#4fa678";
const S = "#7d909c";

const pois: [number, number, string, string][] = [
  [650, 1050, O, "food"], [1853, 903, O, "food"], [2475, 1037, O, "food"], [415, 1440, O, "cup"], [1276, 1714, O, "food"],
  [737, 1049, B, "bag"], [2014, 853, B, "bag"], [1990, 1012, B, "bag"], [267, 1001, B, "bag"],
  [1118, 943, B, "cart"], [2112, 980, B, "cart"], [1407, 1099, P, "museum"], [1399, 1386, P, "museum"],
  [1525, 1172, S, "school"], [1992, 1724, S, "dot"], [2225, 1090, G, "dot"], [2022, 1517, G, "dot"],
  [2072, 1220, G, "golf"], [2570, 1362, G, "tree"], [2727, 1463, G, "tree"],
];

const markers: [number, number][] = [
  [1328, 933], [1956, 1003], [1320, 1155], [1316, 1161], [1317, 1247], [1314, 1259], [1316, 1219], [1120, 1275], [1274, 1687],
];

const shields: [number, number][] = [[930, 907], [894, 1155], [909, 1307], [902, 1630]];
const arrows: [number, number, number][] = [[979, 907, 0], [979, 1053, 0], [975, 1120, 0], [1182, 954, 0], [1183, 828, 0], [1154, 1359, 22]];

function CampusMap() {
  const widths = [2.5, 3.5, 4, 5, 6, 7, 8, 10, 11, 12, 13, 13.5, 14, 15, 16, 17, 19, 20];
  return (
    <svg className="block h-[884px] w-[2453px] shrink-0" viewBox="286 832 2453 884" role="img" aria-label="Map of the University District">
      <rect x="286" y="832" width="2453" height="884" fill={LAND} />
      <Layer draw={(t) => t.areas?.map(([c, d], i) => <path key={i} d={d} fill={c} />)} />
      <Layer draw={(t) => <Line d={t.walks} c="#d9dce1" w={3} />} />
      <Layer draw={(t) => <Line d={t.walks} c="#eae9ec" w={1.4} />} />
      <Layer draw={(t) => <Line d={t.paths} c="#86c8ac" w={1.7} />} />
      <Layer draw={(t) => <Line d={t.dashes} c="#86c8ac" w={1.7} dash="8 4" />} />
      <Layer draw={(t) => t.roads.map(([w, d], i) => <Line key={i} d={d} c={w > 5 ? "#bfc9d1" : w > 4 ? "#c8d3d9" : "#d2dae3"} w={w + (w > 5 ? 2.4 : w > 4 ? 0.8 : 0)} />)} />
      {widths.map((w) => (
        <Layer key={w} draw={(t) => t.roads.filter(([rw]) => rw === w).map(([rw, d], i) => <Line key={i} d={d} c={rw > 5 ? "#d9e0e7" : rw > 4 ? "#d8e1e5" : "#d3dbe4"} w={rw > 4 ? rw - 0.8 : rw} />)} />
      ))}
      <Layer draw={(t) => <Line d={t.ramps} c="#7790b0" w={11} />} />
      <Layer draw={(t) => t.highway && <path d={t.highway} fill="#91a4be" stroke="#7790b0" strokeWidth="2.5" vectorEffect="non-scaling-stroke" />} />
      <Layer draw={(t) => <Line d={t.ramps} c="#91a4be" w={8} />} />
      <Layer draw={(t) => <Line d={t.lanes} c="#7790b0" w={2.4} />} />

      {arrows.map(([x, y, r], i) => (
        <path key={i} transform={`translate(${x} ${y}) rotate(${r})`} d="M0,-9 l5,8 h-3.6 v10 h-2.8 v-10 h-3.6z" fill="#7c8894" />
      ))}
      <rect x="1275" y="1146" width="28" height="28" rx="7" fill="#4b6076" stroke="#fff" strokeWidth="3" />
      <path d="M1283,1153 h12 v12 h-12z M1285,1168 v3 M1293,1168 v3" fill="none" stroke="#fff" strokeWidth="2.4" />

      {labels.map(([k, x, y, text, len, rot = 0, anchor = "middle"], i) => (
        <MapText key={i} k={k} textAnchor={anchor} textLength={len} transform={`translate(${x} ${y}) rotate(${rot})`} y={kinds[k].size * 0.355}>
          {text}
        </MapText>
      ))}
      {curved.map(([id, d, text, k, len]) => (
        <g key={id}>
          <path id={id} d={d} fill="none" />
          <MapText k={k} textLength={len}>
            <textPath href={`#${id}`} textLength={len}>{text}</textPath>
          </MapText>
        </g>
      ))}

      {shields.map(([x, y], i) => (
        <g key={i} transform={`translate(${x} ${y})`}>
          <path d="M-12,-7 h24 q3,8 0,13 q-4,7 -12,11 q-8,-4 -12,-11 q-3,-5 0,-13z" fill="#4a79c8" />
          <path d="M-12,-15 l4,2 l4,-2 l4,-2 l4,2 l4,2 l4,-2 v7 h-24z" fill="#cf6661" />
          <path d="M-13,-8 h26" stroke="#fff" strokeWidth="2" />
          <text x="0" y="8" textAnchor="middle" fontFamily="Roboto, sans-serif" fontWeight="700" fontSize="18" fill="#fff">5</text>
        </g>
      ))}

      {pois.map(([x, y, c, g], i) => (
        <g key={i} transform={`translate(${x} ${y})`}>
          <path d="M0,33 q-3,0 -5,-4 q-2,-4 -7,-8 a24,24.5 0 1 1 24,0 q-5,4 -7,8 q-2,4 -5,4z" fill="#5b6670" opacity="0.35" />
          <path d="M0,31 q-3,0 -5,-4 q-2,-3 -8,-7 a24,24.5 0 1 1 26,0 q-6,4 -8,7 q-2,4 -5,4z" fill="#fff" />
          <circle r="20" fill={c} />
          {glyphs[g]}
        </g>
      ))}

      {markers.map(([x, y], i) => (
        <path key={i} transform={`translate(${x} ${y})`} fill="#808080" d="M0,48 C-4,30 -9,23 -16,15 C-22,8 -25.500,4 -25.500,-1 A25.500,25 0 0 1 25.500,-1 C25.500,4 22,8 16,15 C9,23 4,30 0,48z" />
      ))}
      {markers.map(([x, y], i) => (i === 2 || i === 4 || i === 5 ? null : <ellipse key={i} cx={x} cy={y} rx="10" ry="10" fill="#fff" />))}
      <path d="M1305,1253 q-1,12 8,15 q-5,-8 -8,-15z M1323,1253 q1,12 -8,15 q5,-8 8,-15z" fill="#fff" stroke="#fff" strokeWidth="1" />
    </svg>
  );
}

/* Badge pictures ---------------------------------------------------- */

function PlateIcon() {
  return (
    <svg className="h-[24px] w-[26px]" viewBox="0 0 26 24" aria-hidden="true">
      <path d="M1,2 v6 q0,2 1.500,2 v12 M4,2 v6 q0,2 -1.500,2 M2.500,2 v8" fill="none" stroke="#8f8f8a" strokeWidth="1.400" />
      <path d="M24,2 v20 M24,2 q-2,5 -.5,11" fill="none" stroke="#a5a59f" strokeWidth="1.600" />
      <ellipse cx="13" cy="12" rx="9" ry="9.500" fill="#dcdcdc" stroke="#bcbcb8" strokeWidth="1" />
      <ellipse cx="13" cy="12" rx="6" ry="6.500" fill="#ececec" stroke="#c8c8c8" strokeWidth="0.800" />
    </svg>
  );
}

function FlameIcon() {
  return (
    <svg className="h-[26px] w-[22px]" viewBox="0 0 22 26" aria-hidden="true">
      <path d="M11,0 Q10,5 7,8 Q6,10 5,6 Q1,11 1,16 Q1,25 11,25.500 Q21,25 21,16 Q21,12 19,8 Q18,11 16.500,12 Q17,4 11,0z" fill="#f0522d" />
      <path d="M11,6 Q11,10 7.500,13 Q4,16 5,20 Q7,25 11,25 Q17,25 18,19 Q18,15 16,13 Q15,15 14,15 Q14.500,9 11,6z" fill="#fb9a2c" />
      <path d="M11,14 Q10,17 8,19 Q7,25 11.500,25 Q16,24.500 14.500,19 Q13,18 11,14z" fill="#fff0a0" />
    </svg>
  );
}

function RestaurantCard({ name, address }: { name: string; address: string }) {
  return (
    <article className="flex h-[258px] w-[594px] flex-col items-center rounded-[13px] border-2 border-[#d0d1d2] bg-white pt-[35px]">
      <h2 className="mr-[2px] text-[42.300px] leading-[50px] text-[#212529]">{name}</h2>
      <p className="mt-[4px] mr-[2px] text-[34px] leading-[48px] text-[#5a5d60]">{address}</p>
      <div className="mr-[18px] mt-[39px] flex h-[43px] gap-[17px] text-[25.300px] leading-[43px] font-bold">
        <span className="flex w-[135px] items-center justify-center gap-[6px] rounded-full bg-[#f5c244] text-[#212529]">
          <PlateIcon />
          Other
        </span>
        <span className="flex w-[161px] items-center justify-center gap-[9px] rounded-full bg-[#316cf4] text-white">
          <FlameIcon />
          Popular
        </span>
      </div>
    </article>
  );
}

const restaurants = [
  { name: "Portage Bay Cafe", address: "4130 Roosevelt Way NE" },
  { name: "Shawarma King", address: "4759 Brooklyn Ave NE" },
  { name: "Big Time Brewery", address: "4133 University Way NE" },
];

export default function App() {
  return (
    <div className={`h-[1716px] w-[3024px] overflow-hidden bg-black ${sans}`}>
      <div className="flex h-full flex-col overflow-hidden rounded-b-[20px] bg-white">
        <header className="flex h-[124px] shrink-0 items-center justify-between border-t-2 border-[#474747] bg-[#ffffe3] pr-[50px]">
          <h1 className="text-[102px] leading-[122px] font-bold text-[#f39436]">Table Together</h1>
          <p className="-mt-[2px] text-[34px] italic text-[#5a5d5b]">For UW Students, By UW Students</p>
        </header>

        <nav className="flex h-[161px] shrink-0 items-center justify-between bg-[#f0a93b] pr-[101px] pl-[153px] text-white">
          <div className="flex gap-[68.500px] text-[33.900px] font-bold">
            <a>Restaurants</a>
            <a>Map</a>
            <a>About Us</a>
          </div>
          <div className="mb-[7px] flex items-center gap-[67px]">
            <FaUser className="h-[52px] w-[45px]" />
            <FaGear className="size-[52px]" />
          </div>
        </nav>

        <main className="flex flex-col items-center">
          <h1 className="mt-[66px] text-[85px] leading-[104px] font-bold text-[#212529]">Saved Restaurants</h1>
          <section className="mt-[17px] flex w-full items-center justify-center">
            <div className="mt-[44px] flex w-[83px]">
              <FaChevronCircleLeft className="size-[53px] text-[#f5be6c]" />
            </div>
            <div className="flex w-[2388px] gap-[224px]">
              {restaurants.map((r) => (
                <RestaurantCard key={r.name} {...r} />
              ))}
            </div>
            <div className="mt-[44px] flex w-[53px] justify-end">
              <FaChevronCircleRight className="size-[53px] text-[#f0a93b]" />
            </div>
          </section>
          <div className="mt-[102px] flex">
            <CampusMap />
          </div>
        </main>
      </div>
    </div>
  );
}
